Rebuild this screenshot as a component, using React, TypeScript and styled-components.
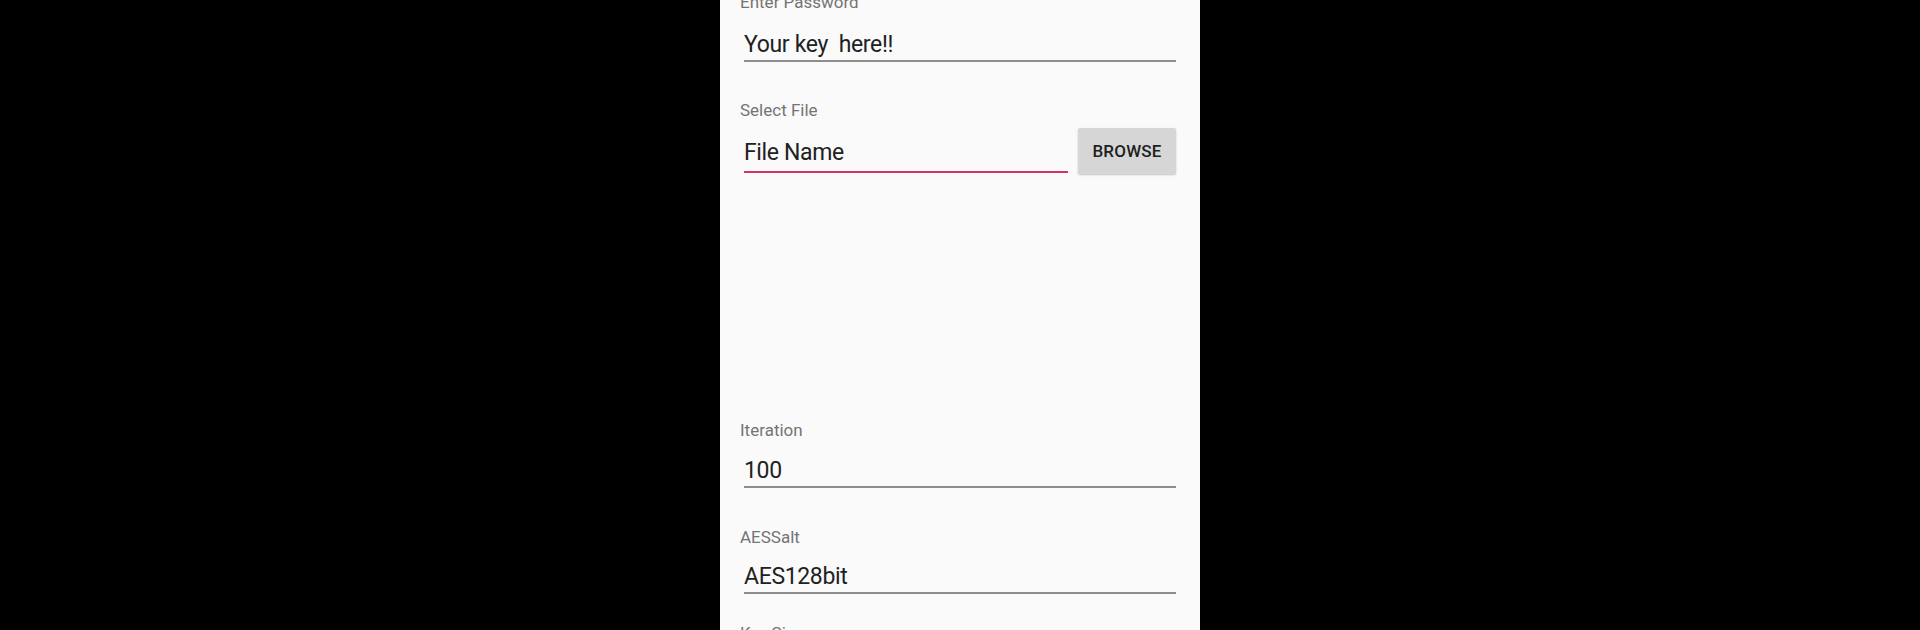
import React from "react";
import styled, { createGlobalStyle } from "styled-components";

const Global = createGlobalStyle`
  html, body {
    margin: 0;
    padding: 0;
    height: 630px;
    overflow: hidden;
    background: #000000;
  }
  #root {
    height: 630px;
  }
`;

const Stage = styled.div`
  display: flex;
  justify-content: center;
  height: 630px;
  background: #000000;
  overflow: hidden;
`;

const Panel = styled.div`
  width: 480px;
  height: 630px;
  background: #fafafa;
  box-sizing: border-box;
  padding: 0 24px 0 20px;
  display: flex;
  flex-direction: column;
  font-family: Roboto, "Noto Sans", sans-serif;
  overflow: hidden;
`;

const Label = styled.div<{ $mt: number }>`
  margin-top: ${(p) => p.$mt}px;
  font-size: 17px;
  line-height: 20px;
  height: 20px;
  color: #747474;
  white-space: nowrap;
  flex: none;
`;

const TextLine = styled.div<{ $mt: number; $focused?: boolean }>`
  margin-top: ${(p) => p.$mt}px;
  margin-left: 4px;
  font-size: 23px;
  letter-spacing: -0.35px;
  line-height: 31px;
  height: 31px;
  color: #212121;
  white-space: pre;
  padding-bottom: ${(p) => (p.$focused ? 3 : 0)}px;
  border-bottom: ${(p) => (p.$focused ? "2.5px solid #d2336c" : "2px solid #8e8e8e")};
  flex: ${(p) => (p.$focused ? "1 1 auto" : "none")};
`;

const FileRow = styled.div`
  margin-top: 8px;
  display: flex;
  align-items: flex-start;
  gap: 10px;
  height: 46px;
  flex: none;
`;

const BrowseButton = styled.button`
  flex: none;
  width: 98px;
  height: 46px;
  border: none;
  border-radius: 2px;
  background: #d6d6d6;
  box-shadow: 0 1px 2px rgba(0, 0, 0, 0.22);
  font-family: Roboto, "Noto Sans", sans-serif;
  font-weight: 500;
  font-size: 17px;
  letter-spacing: 0.2px;
  color: #1f1f1f;
  padding: 0;
  cursor: pointer;
`;

const Spacer = styled.div<{ $h: number }>`
  height: ${(p) => p.$h}px;
  flex: none;
`;

export default function App() {
  return (
    <>
      <Global />
      <Stage>
        <Panel>
          <Label $mt={-8}>Enter Password</Label>
          <TextLine $mt={17}>Your key  here!!</TextLine>

          <Label $mt={38}>Select File</Label>
          <FileRow>
            <TextLine $mt={9} $focused>
              File Name
            </TextLine>
            <BrowseButton>BROWSE</BrowseButton>
          </FileRow>

          <Spacer $h={246} />

          <Label $mt={0}>Iteration</Label>
          <TextLine $mt={15}>100</TextLine>

          <Label $mt={39}>AESSalt</Label>
          <TextLine $mt={14}>AES128bit</TextLine>

          <Label $mt={29}>Key Size</Label>
        </Panel>
      </Stage>
    </>
  );
}
